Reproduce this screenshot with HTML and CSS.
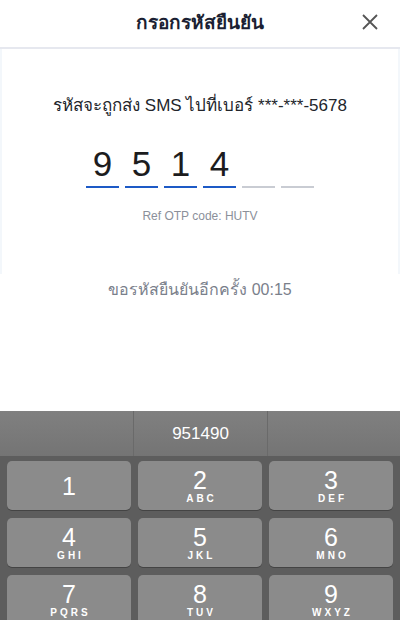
FILE: index.html
```html
<!DOCTYPE html>
<html lang="th">
<head>
    <meta charset="UTF-8">
    <meta name="viewport" content="width=device-width, initial-scale=1.0">
    <title>กรอกรหัสยืนยัน</title>
    <link rel="stylesheet" href="styles.css">
</head>
<body>
    <div class="screen">
        <header class="top-bar">
            <h1>กรอกรหัสยืนยัน</h1>
            <button class="close-button" aria-label="close">
                <svg width="16" height="16" viewBox="0 0 16 16">
                    <path d="M1 1 L15 15 M15 1 L1 15" stroke="#555" stroke-width="1.8" fill="none"/>
                </svg>
            </button>
        </header>

        <div class="card-wrap">
            <div class="card">
                <p class="sms-text">รหัสจะถูกส่ง SMS ไปที่เบอร์ ***-***-5678</p>
                <div class="otp-row">
                    <div class="otp-slot filled">9</div>
                    <div class="otp-slot filled">5</div>
                    <div class="otp-slot filled">1</div>
                    <div class="otp-slot filled">4</div>
                    <div class="otp-slot"></div>
                    <div class="otp-slot"></div>
                </div>
                <p class="ref-code">Ref OTP code: HUTV</p>
            </div>
        </div>

        <p class="resend">ขอรหัสยืนยันอีกครั้ง 00:15</p>

        <div class="keyboard">
            <div class="suggest-bar">
                <div class="suggest"></div>
                <div class="suggest">951490</div>
                <div class="suggest"></div>
            </div>
            <div class="keys">
                <div class="key"><span class="num">1</span></div>
                <div class="key"><span class="num">2</span><span class="letters">ABC</span></div>
                <div class="key"><span class="num">3</span><span class="letters">DEF</span></div>
                <div class="key"><span class="num">4</span><span class="letters">GHI</span></div>
                <div class="key"><span class="num">5</span><span class="letters">JKL</span></div>
                <div class="key"><span class="num">6</span><span class="letters">MNO</span></div>
                <div class="key"><span class="num">7</span><span class="letters">PQRS</span></div>
                <div class="key"><span class="num">8</span><span class="letters">TUV</span></div>
                <div class="key"><span class="num">9</span><span class="letters">WXYZ</span></div>
            </div>
        </div>
    </div>
</body>
</html>
```

FILE: styles.css
```css
* {
    box-sizing: border-box;
}

body {
    margin: 0;
    font-family: "Liberation Sans", "Noto Sans", sans-serif;
    background-color: #fff;
}

.screen {
    width: 400px;
    height: 620px;
    display: flex;
    flex-direction: column;
    overflow: hidden;
}

.top-bar {
    height: 49px;
    flex-shrink: 0;
    display: flex;
    align-items: center;
    justify-content: center;
    position: relative;
    border-bottom: 2px solid #e6e8ef;
}

.top-bar h1 {
    margin: 0 0 4px;
    font-size: 19px;
    font-weight: bold;
    color: #1b1f33;
}

.close-button {
    position: absolute;
    right: 22px;
    top: 14px;
    background: none;
    border: none;
    padding: 0;
    width: 16px;
    height: 16px;
}

.card-wrap {
    background-color: #f3f7fb;
    padding: 0 2px;
}

.card {
    background-color: #fff;
    height: 225px;
    padding-top: 42px;
    text-align: center;
}

.sms-text {
    margin: 0;
    font-size: 17px;
    color: #22252b;
}

.otp-row {
    display: flex;
    justify-content: center;
    gap: 6px;
    margin-top: 27px;
}

.otp-slot {
    width: 33px;
    height: 43px;
    border-bottom: 2px solid #c9ccd3;
    font-size: 35px;
    line-height: 38px;
    color: #1c1c1e;
}

.otp-slot.filled {
    border-bottom-color: #1d5ac6;
}

.ref-code {
    margin: 21px 0 0;
    font-size: 12px;
    color: #8b909a;
}

.resend {
    margin: 3px 0 0;
    text-align: center;
    font-size: 16px;
    color: #7a808b;
}

.keyboard {
    margin-top: auto;
    height: 209px;
    background-color: #5d5d5d;
    flex-shrink: 0;
}

.suggest-bar {
    height: 45px;
    display: grid;
    grid-template-columns: 133px 134px 133px;
    background: linear-gradient(#808080, #747474);
}

.suggest {
    border-left: 1px solid #6a6a6a;
    color: #fff;
    font-size: 17px;
    display: flex;
    align-items: center;
    justify-content: center;
}

.suggest:first-child {
    border-left: none;
}

.keys {
    display: grid;
    grid-template-columns: repeat(3, 1fr);
    column-gap: 7px;
    row-gap: 8px;
    padding: 5px 7px 0;
}

.key {
    height: 49px;
    background-color: #8b8b8b;
    border-radius: 5px;
    box-shadow: 0 1px 0 #444;
    display: flex;
    flex-direction: column;
    align-items: center;
    justify-content: center;
    color: #fff;
}

.key .num {
    font-size: 25px;
    line-height: 26px;
}

.key .letters {
    font-size: 10px;
    font-weight: bold;
    letter-spacing: 3px;
    margin-left: 3px;
    line-height: 12px;
}
```
